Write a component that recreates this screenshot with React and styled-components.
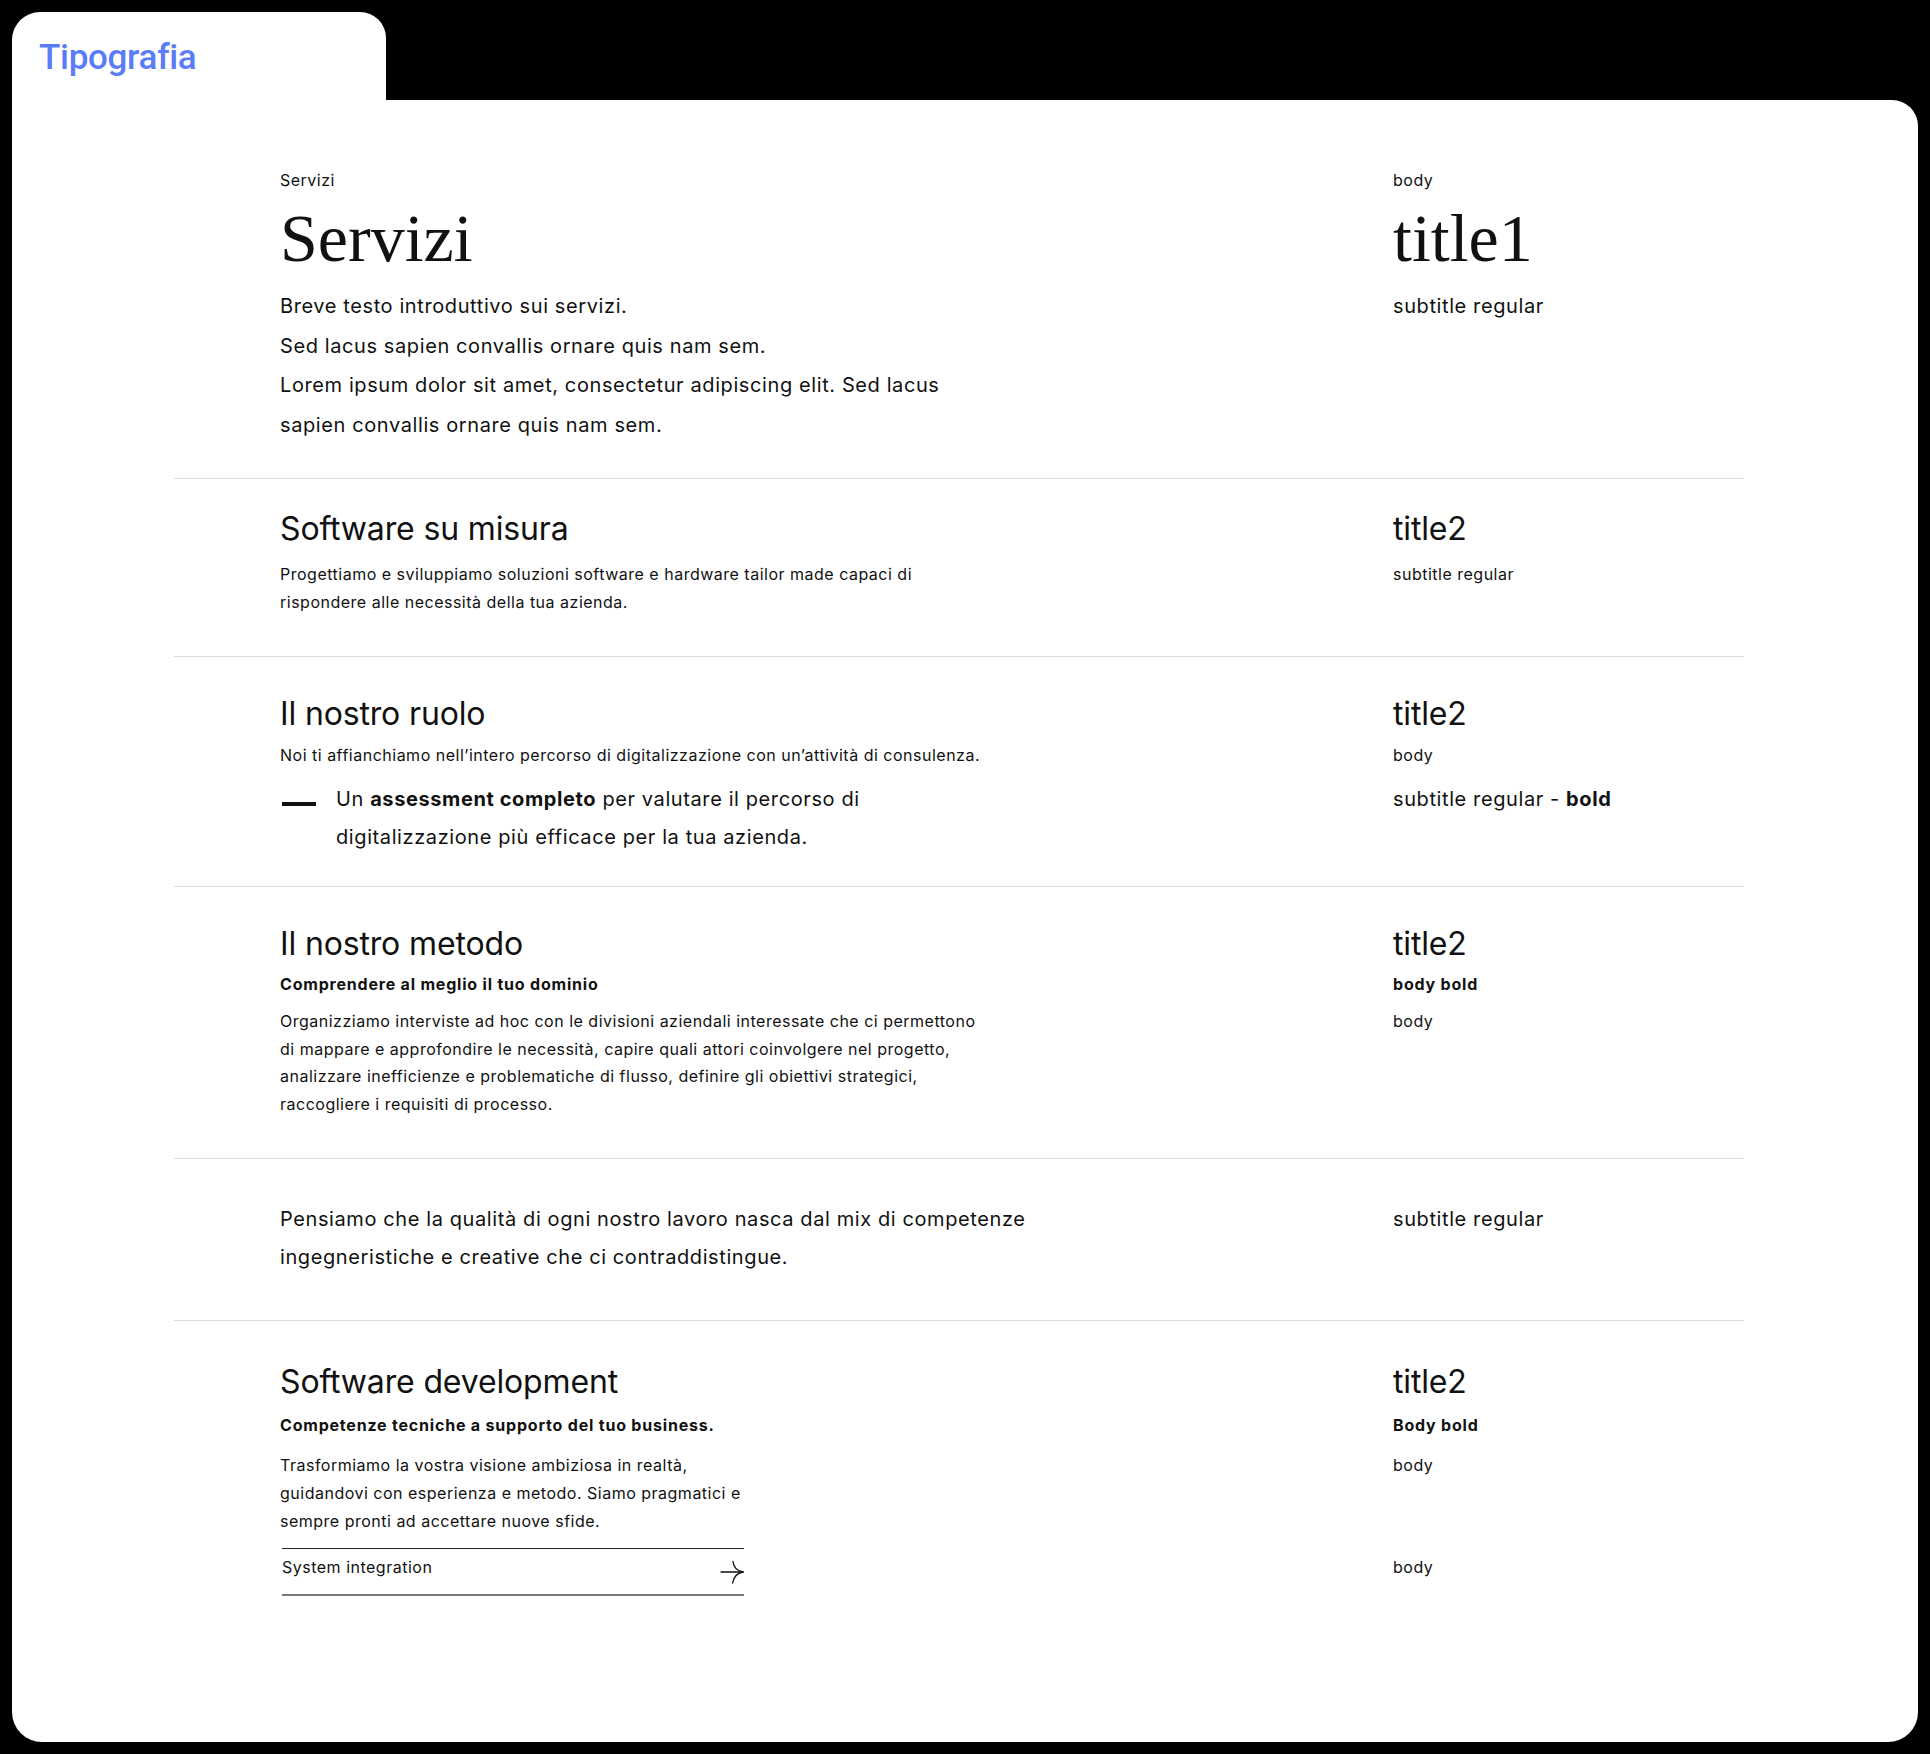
import React from 'react'
import styled, { createGlobalStyle } from 'styled-components'

const GlobalStyle = createGlobalStyle`
  html, body {
    margin: 0;
    padding: 0;
    background: #000;
  }
  body {
    font-family: Inter, "Noto Sans", sans-serif;
    color: #111;
    -webkit-font-smoothing: antialiased;
  }
`

const Page = styled.div`
  padding: 12px;
  width: 1930px;
  height: 1754px;
  box-sizing: border-box;
  display: flex;
  flex-direction: column;
`

const Tab = styled.div`
  width: 374px;
  height: 88px;
  box-sizing: border-box;
  background: #fff;
  border-radius: 28px 26px 0 0;
  padding: 24px 0 0 27px;
`

const TabTitle = styled.h1`
  margin: 0;
  font-family: Roboto, sans-serif;
  font-weight: 500;
  font-size: 35px;
  line-height: 44px;
  color: #5a7cf6;
  letter-spacing: -0.3px;
`

const Panel = styled.div`
  flex: 1;
  background: #fff;
  border-radius: 0 26px 30px 30px;
  padding: 0 174px 0 162px;
`

const Section = styled.section`
  padding: ${p => p.$top}px 0 ${p => p.$bottom}px 106px;
  border-bottom: ${p => (p.$last ? 'none' : '1px solid #dcdcdc')};
`

const Row = styled.div`
  display: grid;
  grid-template-columns: 1113px 1fr;
  align-items: baseline;
  margin-top: ${p => p.$gap || 0}px;
`

const Body = styled.p`
  margin: 0;
  font-size: 16px;
  line-height: ${p => p.$lh || 28}px;
  font-weight: ${p => (p.$bold ? 700 : 400)};
  letter-spacing: ${p => (p.$bold ? '0.8px' : '0.5px')};
  white-space: nowrap;
`

const Subtitle = styled.p`
  margin: 0;
  font-size: 20px;
  line-height: ${p => p.$lh || 38}px;
  letter-spacing: 0.6px;
  white-space: nowrap;

  b {
    font-weight: 700;
  }
`

const Title1 = styled.h2`
  margin: 0;
  font-family: "Liberation Serif", serif;
  font-weight: 400;
  font-size: 68px;
  line-height: 72px;
`

const Title2 = styled.h3`
  margin: 0;
  font-weight: 400;
  font-size: 32px;
  line-height: 40px;
  letter-spacing: -0.15px;
`

const BulletItem = styled.div`
  display: grid;
  grid-template-columns: 34px 1fr;
  column-gap: 20px;
  align-items: baseline;
  padding-left: 2px;
`

const Dash = styled.span`
  display: block;
  height: 4px;
  background: #111;
`

const LinkRow = styled.div`
  width: 462px;
  height: 48px;
  box-sizing: border-box;
  margin-left: 2px;
  border-top: 1px solid #222;
  border-bottom: 2px solid #7a7a7a;
  display: flex;
  align-items: center;
  justify-content: space-between;
`

const LinkText = styled.span`
  font-size: 16px;
  line-height: 28px;
  letter-spacing: 0.5px;
  padding-bottom: 9px;
`

const Arrow = () => (
  <svg width="24" height="24" viewBox="0 0 24 24" fill="none" stroke="#111" strokeWidth="1.3" strokeLinecap="round">
    <path d="M1 12H23" />
    <path d="M13 1.5C13.6 6.5 17 11 23 12" />
    <path d="M23 12C17 13 13.6 17.5 12.6 23" />
  </svg>
)

export default function App() {
  return (
    <>
      <GlobalStyle />
      <Page>
        <Tab>
          <TabTitle>Tipografia</TabTitle>
        </Tab>
        <Panel>
          <Section $top={66} $bottom={33}>
            <Row>
              <Body>Servizi</Body>
              <Body>body</Body>
            </Row>
            <Row $gap={8}>
              <Title1>Servizi</Title1>
              <Title1>title1</Title1>
            </Row>
            <Row $gap={13}>
              <Subtitle $lh={39.5}>
                Breve testo introduttivo sui servizi.
                <br />
                Sed lacus sapien convallis ornare quis nam sem.
                <br />
                Lorem ipsum dolor sit amet, consectetur adipiscing elit. Sed lacus
                <br />
                sapien convallis ornare quis nam sem.
              </Subtitle>
              <Subtitle $lh={39.5}>subtitle regular</Subtitle>
            </Row>
          </Section>

          <Section $top={30} $bottom={40}>
            <Row>
              <Title2>Software su misura</Title2>
              <Title2>title2</Title2>
            </Row>
            <Row $gap={11}>
              <Body>
                Progettiamo e sviluppiamo soluzioni software e hardware tailor made capaci di
                <br />
                rispondere alle necessità della tua azienda.
              </Body>
              <Body>subtitle regular</Body>
            </Row>
          </Section>

          <Section $top={37} $bottom={30}>
            <Row>
              <Title2>Il nostro ruolo</Title2>
              <Title2>title2</Title2>
            </Row>
            <Row $gap={7}>
              <Body>Noi ti affianchiamo nell’intero percorso di digitalizzazione con un’attività di consulenza.</Body>
              <Body>body</Body>
            </Row>
            <Row $gap={11}>
              <BulletItem>
                <Dash />
                <Subtitle>
                  Un <b>assessment completo</b> per valutare il percorso di
                  <br />
                  digitalizzazione più efficace per la tua azienda.
                </Subtitle>
              </BulletItem>
              <Subtitle>
                subtitle regular - <b>bold</b>
              </Subtitle>
            </Row>
          </Section>

          <Section $top={37} $bottom={40}>
            <Row>
              <Title2>Il nostro metodo</Title2>
              <Title2>title2</Title2>
            </Row>
            <Row $gap={6}>
              <Body $bold>Comprendere al meglio il tuo dominio</Body>
              <Body $bold>body bold</Body>
            </Row>
            <Row $gap={10}>
              <Body $lh={27.5}>
                Organizziamo interviste ad hoc con le divisioni aziendali interessate che ci permettono
                <br />
                di mappare e approfondire le necessità, capire quali attori coinvolgere nel progetto,
                <br />
                analizzare inefficienze e problematiche di flusso, definire gli obiettivi strategici,
                <br />
                raccogliere i requisiti di processo.
              </Body>
              <Body $lh={27.5}>body</Body>
            </Row>
          </Section>

          <Section $top={41} $bottom={44}>
            <Row>
              <Subtitle>
                Pensiamo che la qualità di ogni nostro lavoro nasca dal mix di competenze
                <br />
                ingegneristiche e creative che ci contraddistingue.
              </Subtitle>
              <Subtitle>subtitle regular</Subtitle>
            </Row>
          </Section>

          <Section $top={41} $bottom={0} $last>
            <Row>
              <Title2>Software development</Title2>
              <Title2>title2</Title2>
            </Row>
            <Row $gap={9}>
              <Body $bold>Competenze tecniche a supporto del tuo business.</Body>
              <Body $bold>Body bold</Body>
            </Row>
            <Row $gap={12}>
              <Body>
                Trasformiamo la vostra visione ambiziosa in realtà,
                <br />
                guidandovi con esperienza e metodo. Siamo pragmatici e
                <br />
                sempre pronti ad accettare nuove sfide.
              </Body>
              <Body>body</Body>
            </Row>
            <Row $gap={13}>
              <LinkRow>
                <LinkText>System integration</LinkText>
                <Arrow />
              </LinkRow>
              <Body>body</Body>
            </Row>
          </Section>
        </Panel>
      </Page>
    </>
  )
}
